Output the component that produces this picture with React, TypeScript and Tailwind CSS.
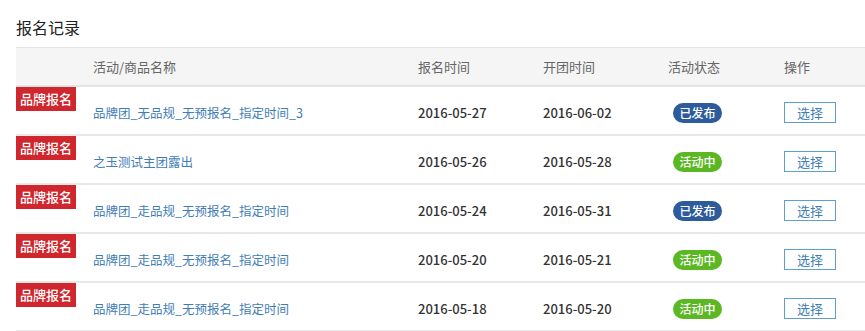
import React from "react";

type Row = {
  name: string;
  signup: string;
  open: string;
  status: "published" | "active";
};

const rows: Row[] = [
  { name: "品牌团_无品规_无预报名_指定时间_3", signup: "2016-05-27", open: "2016-06-02", status: "published" },
  { name: "之玉测试主团露出", signup: "2016-05-26", open: "2016-05-28", status: "active" },
  { name: "品牌团_走品规_无预报名_指定时间", signup: "2016-05-24", open: "2016-05-31", status: "published" },
  { name: "品牌团_走品规_无预报名_指定时间", signup: "2016-05-20", open: "2016-05-21", status: "active" },
  { name: "品牌团_走品规_无预报名_指定时间", signup: "2016-05-18", open: "2016-05-20", status: "active" },
];

const font = { fontFamily: '"Noto Sans CJK SC", "Open Sans", sans-serif' };

export default function App() {
  return (
    <div className="w-[865px] h-[331px] overflow-hidden bg-white pl-4 pt-4" style={font}>
      <h2 className="text-[16px] leading-[22px] text-[#222] font-normal">报名记录</h2>

      <div className="mt-[9px]">
        {/* header */}
        <div className="grid grid-cols-[77px_325px_125px_125px_116px_1fr] h-[40px] items-center bg-[#f5f5f5] border-t border-b-2 border-[#e4e4e4] text-[13px] text-[#666]">
          <div />
          <div>活动/商品名称</div>
          <div>报名时间</div>
          <div>开团时间</div>
          <div>活动状态</div>
          <div>操作</div>
        </div>

        {rows.map((row, i) => (
          <div
            key={i}
            className="relative grid grid-cols-[77px_325px_125px_125px_116px_1fr] h-[49px] pt-[4px] items-center border-b-2 border-[#e8e8e8] text-[13px]"
          >
            <span className="absolute left-0 top-0 h-[24px] w-[60px] flex items-center justify-center bg-[#d0262d] text-white text-[13px] font-medium">
              品牌报名
            </span>
            <div />
            <div className="pt-[1px] text-[12.5px] text-[#3f7db7]">{row.name}</div>
            <div className="font-medium text-[#333]">{row.signup}</div>
            <div className="font-medium text-[#333]">{row.open}</div>
            <div>
              {row.status === "published" ? (
                <span className="ml-[5px] inline-flex h-[20px] w-[49px] items-center justify-center rounded-full bg-[#2d5b9b] text-[12px] font-medium text-white">
                  已发布
                </span>
              ) : (
                <span className="ml-[5px] inline-flex h-[20px] w-[49px] items-center justify-center rounded-full bg-[#5bb824] text-[12px] font-medium text-white">
                  活动中
                </span>
              )}
            </div>
            <div>
              <button className="h-[21px] w-[52px] border border-[#5d9fd0] bg-white text-[13px] leading-none text-[#3f7db7]">
                选择
              </button>
            </div>
          </div>
        ))}
      </div>
    </div>
  );
}
